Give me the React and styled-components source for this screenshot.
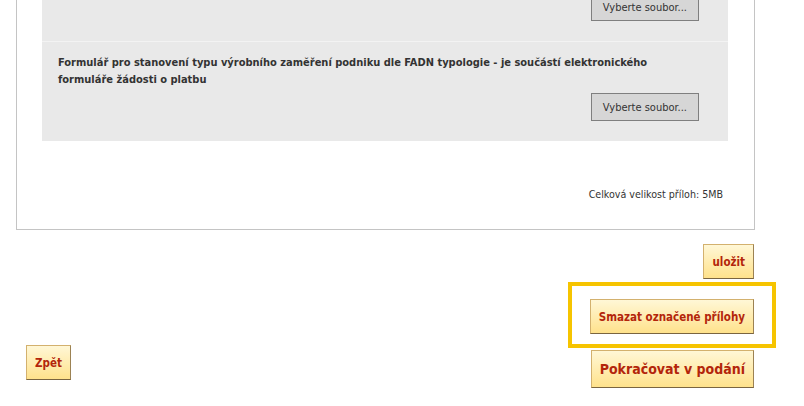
import React from "react";
import styled, { createGlobalStyle } from "styled-components";

const GlobalStyle = createGlobalStyle`
  html, body {
    margin: 0;
    padding: 0;
    background: #ffffff;
  }
  body {
    font-family: Tahoma, "DejaVu Sans Condensed", "DejaVu Sans", Verdana, sans-serif;
    font-size: 11px;
    color: #333333;
    overflow: hidden;
  }
`;

const Page = styled.div`
  width: 804px;
  height: 406px;
  overflow: hidden;
  padding-left: 16px;
  box-sizing: border-box;
`;

const Content = styled.div`
  width: 739px;
`;

// the page is scrolled: top part of the panel is above the viewport
const Panel = styled.div`
  margin-top: -58px;
  border: 1px solid #c4c4c4;
  border-top: none;
  padding: 0 26px 28px 25px;
`;

const Attachments = styled.div`
  background: #e9e9e9;
`;

const Row = styled.div`
  display: flex;
  flex-direction: column;
  padding: 12px 29px 20px 16px;
  border-top: ${(p) => (p.$first ? "none" : "1px solid #f3f3f3")};
`;

const Label = styled.div`
  font-weight: bold;
  font-size: 11px;
  line-height: 17px;
  min-height: 34px;
  color: #333333;
`;

const FileButton = styled.button`
  align-self: flex-end;
  margin-top: 5px;
  height: 28px;
  padding: 0 11px;
  background: #d6d6d6;
  border: 1px solid #7f7f7f;
  font-family: inherit;
  font-size: 11px;
  color: #333333;
  cursor: pointer;
`;

const Total = styled.div`
  margin-top: 46px;
  padding-right: 5px;
  text-align: right;
  line-height: 14px;
  font-size: 10.6px;
  color: #333333;
`;

const Actions = styled.div`
  display: flex;
  justify-content: space-between;
  align-items: flex-end;
  padding-left: 10px;
  margin-right: 1px;
`;

const RightColumn = styled.div`
  display: flex;
  flex-direction: column;
  align-items: flex-end;
  margin-top: 14px;
`;

const Highlight = styled.div`
  margin-top: 3px;
  margin-right: -22px;
  border: 4px solid #f6c400;
  padding: 13px 18px 10px 18px;
`;

const ActionButton = styled.button`
  display: block;
  height: ${(p) => (p.$big ? "38px" : "35px")};
  padding: 0 ${(p) => (p.$big ? "8px" : "8px")};
  margin-top: ${(p) => p.$mt || "0"};
  margin-bottom: ${(p) => p.$mb || "0"};
  background: linear-gradient(#fff7d6, #ffe28c);
  border: 1px solid #d3b16e;
  border-right-color: #9c8253;
  border-bottom-color: #7a6540;
  font-family: inherit;
  font-weight: bold;
  font-size: ${(p) => (p.$big ? "14px" : "11.5px")};
  color: #b3250b;
  cursor: pointer;
`;

const rows = [
  "",
  "Formulář pro stanovení typu výrobního zaměření podniku dle FADN typologie - je součástí elektronického formuláře žádosti o platbu",
];

export default function App() {
  return (
    <>
      <GlobalStyle />
      <Page>
        <Content>
          <Panel>
            <Attachments>
              {rows.map((text, i) => (
                <Row key={i} $first={i === 0}>
                  <Label>{text}</Label>
                  <FileButton type="button">Vyberte soubor...</FileButton>
                </Row>
              ))}
            </Attachments>
            <Total>Celková velikost příloh: 5MB</Total>
          </Panel>
          <Actions>
            <ActionButton type="button" $mb="8px">Zpět</ActionButton>
            <RightColumn>
              <ActionButton type="button">uložit</ActionButton>
              <Highlight>
                <ActionButton type="button">Smazat označené přílohy</ActionButton>
              </Highlight>
              <ActionButton type="button" $big $mt="2px">
                Pokračovat v podání
              </ActionButton>
            </RightColumn>
          </Actions>
        </Content>
      </Page>
    </>
  );
}
